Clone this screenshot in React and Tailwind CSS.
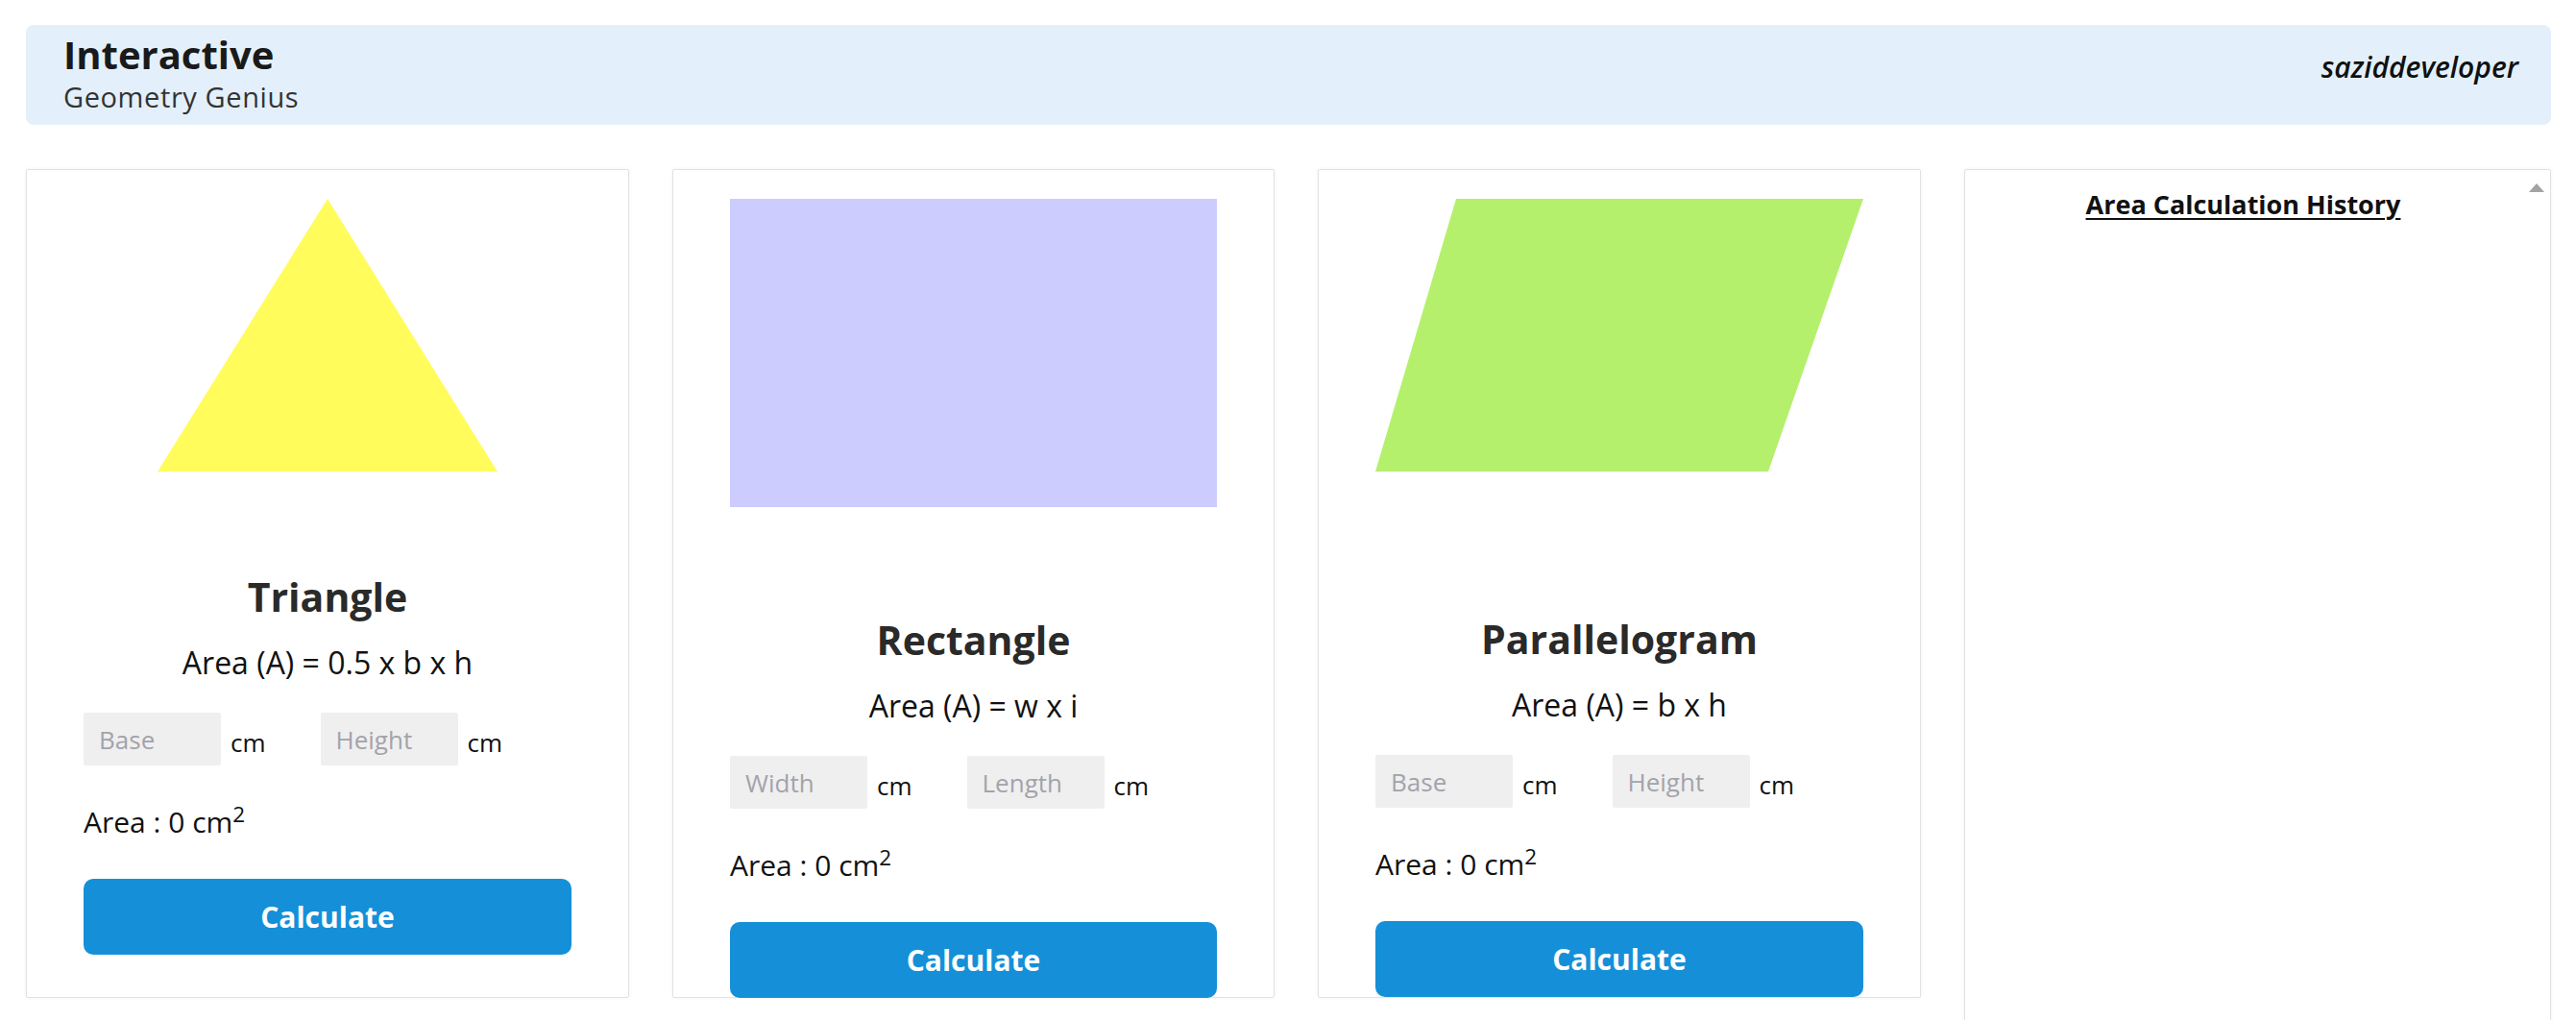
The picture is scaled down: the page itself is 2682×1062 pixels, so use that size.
const SHAPES = [
  {
    name: 'Triangle',
    formula: 'Area (A) = 0.5 x b x h',
    fields: ['Base', 'Height'],
    titleGap: 'mt-[109px]',
  },
  {
    name: 'Rectangle',
    formula: 'Area (A) = w x i',
    fields: ['Width', 'Length'],
    titleGap: 'mt-[117px]',
  },
  {
    name: 'Parallelogram',
    formula: 'Area (A) = b x h',
    fields: ['Base', 'Height'],
    titleGap: 'mt-[153px]',
  },
]

function ShapeDrawing({ name }) {
  if (name === 'Triangle') {
    return (
      <div className="flex justify-center">
        <svg width="354" height="284" viewBox="0 0 354 284">
          <polygon points="177,0 354,284 0,284" fill="#fffc5c" />
        </svg>
      </div>
    )
  }
  if (name === 'Rectangle') {
    return <div className="w-full h-[321px] bg-[#ccccff]" />
  }
  return (
    <svg width="508" height="284" viewBox="0 0 508 284" className="block">
      <polygon points="84,0 508,0 409,284 0,284" fill="#b4f06c" />
    </svg>
  )
}

function ShapeCard({ shape }) {
  return (
    <div className="h-[863px] bg-white border border-[#e2e2e2] rounded-[2px] shadow-[0_0_4px_rgba(0,0,0,0.05)] px-[59px] pt-[30px]">
      <ShapeDrawing name={shape.name} />

      <h2 className={`${shape.titleGap} text-center text-[41px] leading-[42px] font-bold text-[#2a2a2a]`}>
        {shape.name}
      </h2>
      <p className="mt-[32px] text-center text-[32px] leading-[31px] text-[#111]">{shape.formula}</p>

      {/* inputs */}
      <div className="mt-[37px] flex items-center gap-[57px]">
        {shape.fields.map(field => (
          <div key={field} className="flex items-center gap-[10px]">
            <input
              type="text"
              placeholder={field}
              className="w-[143px] h-[55px] bg-[#efefef] rounded-[2px] pl-[16px] text-[26px] text-[#111] placeholder:text-[#a3a3ab] outline-none"
            />
            <span className="text-[26px] leading-[26px] pt-[6px] text-[#111]">cm</span>
          </div>
        ))}
      </div>

      <p className="mt-[44px] text-[30px] leading-[29px] text-[#111]">
        Area : 0 cm<sup>2</sup>
      </p>

      <button className="mt-[45px] w-full h-[79px] rounded-[10px] bg-[#1590d8] text-white text-[30px] font-bold">
        Calculate
      </button>
    </div>
  )
}

export default function App() {
  return (
    <div className="h-[1062px] overflow-hidden bg-white pl-[27px] pr-[26px] pt-[26px] font-['Open_Sans',sans-serif]">
      {/* Header */}
      <header className="h-[104px] rounded-[8px] bg-[#e3f0fb] flex items-start justify-between pl-[39px] pr-[34px] pt-[9px]">
        <div>
          <h1 className="text-[40px] leading-[44px] font-bold text-[#1a1a1a]">Interactive</h1>
          <p className="mt-[8px] text-[29px] leading-[28px] tracking-[0.6px] text-[#333]">Geometry Genius</p>
        </div>
        <span className="mt-[20px] text-[30px] leading-[30px] italic font-semibold text-[#111]">saziddeveloper</span>
      </header>

      <main className="mt-[46px] grid grid-cols-[628px_627px_628px_1fr] gap-[45px] items-start">
        {SHAPES.map(shape => (
          <ShapeCard key={shape.name} shape={shape} />
        ))}

        {/* History */}
        <div className="relative h-[900px] bg-white border border-[#e2e2e2] rounded-[2px] shadow-[0_0_4px_rgba(0,0,0,0.05)] pr-[30px] pt-[22px]">
          <h3 className="text-center text-[27px] leading-[27px] font-bold underline decoration-2 underline-offset-[4px] text-[#111]">
            Area Calculation History
          </h3>
          <svg className="absolute right-[6px] top-[14px]" width="16" height="9" viewBox="0 0 16 9">
            <polygon points="8,0 16,9 0,9" fill="#a3a3a3" />
          </svg>
        </div>
      </main>
    </div>
  )
}
